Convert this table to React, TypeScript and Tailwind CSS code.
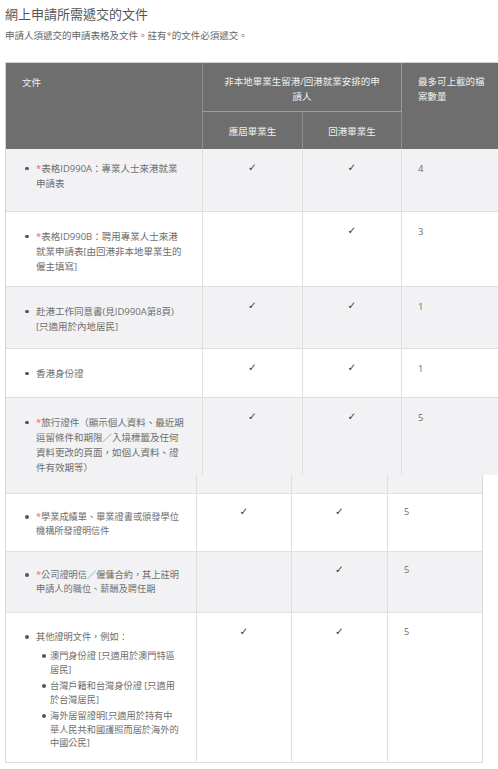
const docs = [
  { req: true, lines: ["表格ID990A：專業人士來港就業", "申請表"], a: true, b: true, n: "4" },
  {
    req: true,
    lines: ["表格ID990B：聘用專業人士來港", "就業申請表[由回港非本地畢業生的", "僱主填寫]"],
    a: false,
    b: true,
    n: "3",
  },
  { req: false, lines: ["赴港工作同意書(見ID990A第8頁)", "[只適用於內地居民]"], a: true, b: true, n: "1" },
  { req: false, lines: ["香港身份證"], a: true, b: true, n: "1" },
  {
    req: true,
    lines: ["旅行證件（顯示個人資料、最近期", "逗留條件和期限／入境標籤及任何", "資料更改的頁面，如個人資料、證", "件有效期等）"],
    a: true,
    b: true,
    n: "5",
  },
]

const lowerDocs = [
  { req: true, lines: ["學業成績單、畢業證書或頒發學位", "機構所發證明信件"], a: true, b: true, n: "5", h: "h-[58px]", bg: "bg-white" },
  { req: true, lines: ["公司證明信／僱傭合約，其上註明", "申請人的職位、薪酬及聘任期"], a: false, b: true, n: "5", h: "h-[61px]", bg: "bg-[#f2f2f4]" },
]

const others = [
  ["澳門身份證 [只適用於澳門特區", "居民]"],
  ["台灣戶籍和台灣身份證 [只適用", "於台灣居民]"],
  ["海外居留證明[只適用於持有中", "華人民共和國護照而居於海外的", "中國公民]"],
]

const topHeights = ["h-[63px]", "h-[75px]", "h-[62px]", "h-[49px]", "h-[100px]"]

function Lines({ req, lines }: { req: boolean; lines: string[] }) {
  return (
    <div>
      {lines.map((line, i) => (
        <div key={i} className="whitespace-nowrap">
          {i === 0 && req && <span className="text-[#e26666]">*</span>}
          {line}
        </div>
      ))}
    </div>
  )
}

function Dot({ w }: { w: string }) {
  return (
    <span className={`flex h-[1lh] shrink-0 items-center ${w}`}>
      <span className="h-[3.5px] w-[3.5px] rounded-full bg-[#555]" />
    </span>
  )
}

function Check({ on, pad }: { on: boolean; pad: string }) {
  return (
    <div className={`border-r border-[#e0e0e0] text-center text-[#3a3a3a] font-['DejaVu_Sans'] text-[10.5px] ${pad}`}>
      {on ? "✓" : ""}
    </div>
  )
}

export default function App() {
  return (
    <div className="w-[498px] h-[769px] overflow-hidden bg-white font-['Open_Sans','Noto_Sans_CJK_TC',sans-serif] text-[#6e6e6e]">
      <div className="h-[475px] overflow-hidden">
        <h1 className="pl-[5px] pt-[6px] text-[13px] leading-[17px] text-[#555]">網上申請所需遞交的文件</h1>
        <p className="pl-[5px] mt-[5px] text-[9.5px] leading-[15px] text-[#666]">
          申請人須遞交的申請表格及文件。註有<span className="text-[#e26666]">*</span>的文件必須遞交。
        </p>

        <div className="ml-[5px] mt-[19px] w-[500px] border-t border-l border-[#d4d4d4] text-[9.5px] leading-[15px]">
          <div className="grid grid-cols-[197px_100px_99px_104px] grid-rows-[49px_37px] bg-[#6e6e6e] text-[#eeeeee]">
            <div className="row-span-2 border-r border-[#8e8e8e] pl-[16px] pt-[12px]">文件</div>
            <div className="col-span-2 border-r border-b border-[#9c9c9c] px-3 pt-[11px] text-center">
              <div className="whitespace-nowrap">非本地畢業生留港/回港就業安排的申</div>
              <div>請人</div>
            </div>
            <div className="row-span-2 pl-4 pt-[11px]">
              <div>最多可上載的檔</div>
              <div>案數量</div>
            </div>
            <div className="border-r border-[#8e8e8e] pt-[12px] text-center">應屆畢業生</div>
            <div className="border-r border-[#8e8e8e] pt-[12px] text-center">回港畢業生</div>
          </div>

          {docs.map((d, i) => (
            <div
              key={i}
              className={`grid grid-cols-[197px_100px_99px_104px] border-b border-[#dedede] ${topHeights[i]} ${
                i % 2 === 0 ? "bg-[#f2f2f4]" : "bg-white"
              }`}
            >
              <div className={`flex border-r border-[#e0e0e0] pl-[19px] pr-4 ${i === 0 ? "pt-[12px]" : "pt-[17px]"}`}>
                <Dot w="w-[11px]" />
                <Lines req={d.req} lines={d.lines} />
              </div>
              <Check on={d.a} pad="pt-[11px]" />
              <Check on={d.b} pad="pt-[11px]" />
              <div className="pl-4 pt-[12px]">{d.n}</div>
            </div>
          ))}
        </div>
      </div>

      <div className="ml-[5px] w-[478px] border-l border-r border-b border-[#dcdcdc] text-[9.2px] leading-[14px]">
        <div className="grid h-[19px] grid-cols-[191px_95px_96px_1fr] border-b border-[#e2e2e2] bg-[#f2f2f4]">
          <div className="border-r border-[#e0e0e0]" />
          <div className="border-r border-[#e0e0e0]" />
          <div className="border-r border-[#e0e0e0]" />
          <div />
        </div>

        {lowerDocs.map((d, i) => (
          <div key={i} className={`grid grid-cols-[191px_95px_96px_1fr] border-b border-[#e2e2e2] ${d.h} ${d.bg}`}>
            <div className="flex border-r border-[#e0e0e0] pl-[19px] pr-4 pt-[16px]">
              <Dot w="w-[11px]" />
              <Lines req={d.req} lines={d.lines} />
            </div>
            <Check on={d.a} pad="pt-[10px]" />
            <Check on={d.b} pad="pt-[10px]" />
            <div className="pl-4 pt-[11px]">{d.n}</div>
          </div>
        ))}

        <div className="grid h-[149px] grid-cols-[191px_95px_96px_1fr] bg-white">
          <div className="flex border-r border-[#e0e0e0] pl-[19px] pr-4 pt-[17px]">
            <Dot w="w-[11px]" />
            <div>
              <div>其他證明文件，例如：</div>
              <ul className="mt-[5px] flex flex-col gap-[3px] leading-[13.5px]">
                {others.map((lines, i) => (
                  <li key={i} className="flex pl-[6px]">
                    <Dot w="w-[8px]" />
                    <Lines req={false} lines={lines} />
                  </li>
                ))}
              </ul>
            </div>
          </div>
          <Check on={true} pad="pt-[11px]" />
          <Check on={true} pad="pt-[11px]" />
          <div className="pl-4 pt-[12px]">5</div>
        </div>
      </div>
    </div>
  )
}
